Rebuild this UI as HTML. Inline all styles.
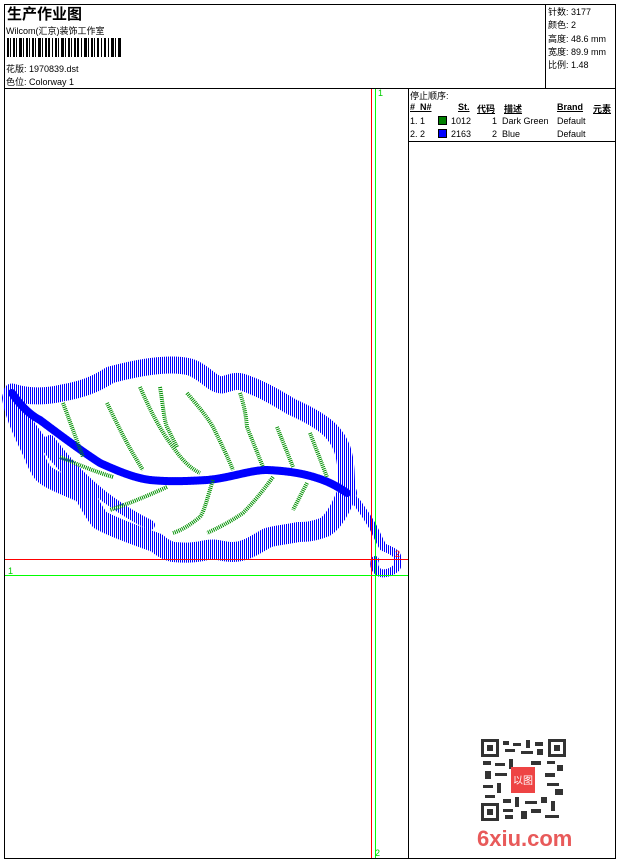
<!DOCTYPE html>
<html><head><meta charset="utf-8"><style>
body{margin:0;width:620px;height:860px;background:#fff;position:relative;font-family:"Liberation Sans","Noto Sans CJK SC",sans-serif;font-size:9px;color:#000;overflow:hidden}
.a{position:absolute;white-space:nowrap}
.ln{position:absolute;background:#000}
</style></head><body>
<div class="ln" style="left:4px;top:4px;width:612px;height:1px"></div>
<div class="ln" style="left:4px;top:858px;width:612px;height:1px"></div>
<div class="ln" style="left:4px;top:4px;width:1px;height:855px"></div>
<div class="ln" style="left:615px;top:4px;width:1px;height:855px"></div>
<div class="ln" style="left:4px;top:88px;width:612px;height:1px"></div>
<div class="ln" style="left:545px;top:4px;width:1px;height:84px"></div>
<div class="ln" style="left:408px;top:88px;width:1px;height:770px"></div>
<div class="ln" style="left:408px;top:141px;width:208px;height:1px"></div>
<div class="a" style="left:7px;top:3px;font-size:15px;font-weight:bold">生产作业图</div>
<div class="a" style="left:6px;top:24px">Wilcom(汇京)装饰工作室</div>
<svg class="a" style="left:7px;top:38px" width="115" height="19">
<g fill="#000">
<rect x="0" y="0" width="2" height="19"/><rect x="3" y="0" width="1" height="19"/><rect x="6" y="0" width="2" height="19"/><rect x="9" y="0" width="1" height="19"/><rect x="12" y="0" width="3" height="19"/><rect x="16" y="0" width="1" height="19"/><rect x="19" y="0" width="2" height="19"/><rect x="22" y="0" width="1" height="19"/><rect x="25" y="0" width="2" height="19"/><rect x="28" y="0" width="1" height="19"/><rect x="31" y="0" width="3" height="19"/><rect x="35" y="0" width="1" height="19"/><rect x="38" y="0" width="2" height="19"/><rect x="41" y="0" width="2" height="19"/><rect x="45" y="0" width="1" height="19"/><rect x="48" y="0" width="2" height="19"/><rect x="51" y="0" width="1" height="19"/><rect x="54" y="0" width="3" height="19"/><rect x="58" y="0" width="1" height="19"/><rect x="61" y="0" width="2" height="19"/><rect x="64" y="0" width="1" height="19"/><rect x="67" y="0" width="2" height="19"/><rect x="70" y="0" width="2" height="19"/><rect x="74" y="0" width="1" height="19"/><rect x="77" y="0" width="3" height="19"/><rect x="81" y="0" width="1" height="19"/><rect x="84" y="0" width="2" height="19"/><rect x="87" y="0" width="1" height="19"/><rect x="90" y="0" width="2" height="19"/><rect x="94" y="0" width="1" height="19"/><rect x="97" y="0" width="2" height="19"/><rect x="101" y="0" width="1" height="19"/><rect x="104" y="0" width="3" height="19"/><rect x="108" y="0" width="1" height="19"/><rect x="111" y="0" width="3" height="19"/>
</g></svg>
<div class="a" style="left:6px;top:62px">花版: 1970839.dst</div>
<div class="a" style="left:6px;top:75px">色位: Colorway 1</div>
<div class="a" style="left:548px;top:6px;line-height:13.3px">针数: 3177<br>颜色: 2<br>高度: 48.6 mm<br>宽度: 89.9 mm<br>比例: 1.48</div>
<div class="a" style="left:410px;top:89px">停止顺序:</div>
<div class="a" style="left:410px;top:102px;font-weight:bold;text-decoration:underline">#&nbsp; N#</div>
<div class="a" style="left:458px;top:102px;font-weight:bold;text-decoration:underline">St.</div>
<div class="a" style="left:477px;top:102px;font-weight:bold;text-decoration:underline">代码</div>
<div class="a" style="left:504px;top:102px;font-weight:bold;text-decoration:underline">描述</div>
<div class="a" style="left:557px;top:102px;font-weight:bold;text-decoration:underline">Brand</div>
<div class="a" style="left:593px;top:102px;font-weight:bold;text-decoration:underline">元素</div>
<div class="a" style="left:410px;top:116px">1. 1</div>
<div class="a" style="left:438px;top:116px;width:9px;height:9px;background:#008000;border:1px solid #000;box-sizing:border-box"></div>
<div class="a" style="left:451px;top:116px">1012</div>
<div class="a" style="left:492px;top:116px">1&nbsp; Dark Green</div>
<div class="a" style="left:557px;top:116px">Default</div>
<div class="a" style="left:410px;top:129px">2. 2</div>
<div class="a" style="left:438px;top:129px;width:9px;height:9px;background:#0000ff;border:1px solid #000;box-sizing:border-box"></div>
<div class="a" style="left:451px;top:129px">2163</div>
<div class="a" style="left:492px;top:129px">2&nbsp; Blue</div>
<div class="a" style="left:557px;top:129px">Default</div>
<svg class="a" style="left:0;top:0" width="620" height="860">
<defs>
<pattern id="h" width="2" height="4" patternUnits="userSpaceOnUse"><rect width="1" height="4" fill="#0000ff"/></pattern>
</defs>
<g fill="none" stroke-linejoin="round" stroke-linecap="round">
<path d="M12,392 C30,398 50,396 62,393 C80,390 95,385 110,375 C140,367 170,362 190,367 C205,372 212,385 222,385 C230,383 235,380 242,382 C265,390 280,400 292,407 C310,415 322,422 330,430 C342,442 345,455 346,470 L347,493" stroke="url(#h)" stroke-width="17"/>
<path d="M347,493 C340,510 333,522 325,527 C312,532 305,532 298,532 C285,535 275,535 267,538 C255,545 245,552 233,552 C222,552 215,548 207,550 C195,553 185,553 173,552 C165,550 160,546 157,543 C135,535 115,528 100,520 C92,510 88,500 83,493 C65,485 50,480 43,473 C37,465 35,458 33,453 C22,430 15,415 12,398" stroke="url(#h)" stroke-width="20"/>
<path d="M20,410 C40,440 60,470 95,495 M50,440 C80,480 110,505 150,525" stroke="url(#h)" stroke-width="10"/>
<path d="M12,393 C20,405 30,415 40,420 C60,435 80,450 100,463 C120,472 135,478 150,480 C170,482 190,481 207,480 C230,478 250,470 267,470 C290,471 305,474 317,478 C330,482 340,488 347,493" stroke="#0000ff" stroke-width="8" stroke-dasharray="1 0.6"/>
<path d="M347,493 C355,500 358,503 360,507 C366,515 370,522 373,527 C377,535 380,542 383,547 C390,550 395,552 397,556 C399,562 398,567 395,569 C390,573 385,574 380,573 C375,570 373,565 375,560" stroke="url(#h)" stroke-width="8"/>
</g>
<g fill="none" stroke="#009000" stroke-width="4" stroke-dasharray="1 1">
<path d="M63,403 L83,457 M107,403 C120,430 130,450 143,470 M140,387 C150,410 160,430 173,447 C182,460 190,468 200,473 M160,387 C163,405 164,420 167,427 L177,447 M187,393 C197,405 206,415 213,427 C222,445 228,458 233,470 M240,393 C244,405 246,415 247,427 L263,467 M277,427 L293,467 M310,433 L327,477"/>
<path d="M213,480 C208,495 205,510 200,517 C190,525 182,530 173,533 M273,477 C262,492 253,503 243,513 C230,522 218,528 207,533 M307,483 L293,510 M167,487 C145,497 125,505 110,510 M113,477 C90,470 75,463 60,457"/>
</g>
<text x="395" y="557" font-size="9" fill="#f00" font-family="Liberation Sans">2</text>
</svg>
<div class="ln" style="left:371px;top:89px;width:1px;height:769px;background:#f00"></div>
<div class="ln" style="left:375px;top:89px;width:1px;height:769px;background:#0f0"></div>
<div class="ln" style="left:5px;top:559px;width:403px;height:1px;background:#f00"></div>
<div class="ln" style="left:5px;top:575px;width:403px;height:1px;background:#0f0"></div>
<div class="a" style="left:378px;top:88px;color:#0c0">1</div>
<div class="a" style="left:8px;top:566px;color:#0c0">1</div>
<div class="a" style="left:375px;top:848px;color:#0c0">2</div>
<svg class="a" style="left:481px;top:739px" width="85" height="82">
<rect width="85" height="82" fill="#fff"/>
<g fill="#333">
<rect x="0" y="0" width="18" height="18"/><rect x="67" y="0" width="18" height="18"/><rect x="0" y="64" width="18" height="18"/>
</g>
<g fill="#fff"><rect x="3" y="3" width="12" height="12"/><rect x="70" y="3" width="12" height="12"/><rect x="3" y="67" width="12" height="12"/></g>
<g fill="#333"><rect x="6" y="6" width="6" height="6"/><rect x="73" y="6" width="6" height="6"/><rect x="6" y="70" width="6" height="6"/>
<rect x="22" y="2" width="6" height="4"/><rect x="32" y="4" width="8" height="3"/><rect x="45" y="1" width="4" height="8"/><rect x="54" y="3" width="8" height="4"/><rect x="24" y="10" width="10" height="3"/><rect x="40" y="12" width="12" height="3"/><rect x="56" y="10" width="6" height="6"/>
<rect x="2" y="22" width="8" height="4"/><rect x="14" y="24" width="10" height="3"/><rect x="28" y="20" width="4" height="10"/><rect x="50" y="22" width="10" height="4"/><rect x="66" y="22" width="8" height="3"/><rect x="76" y="26" width="6" height="6"/>
<rect x="4" y="32" width="6" height="8"/><rect x="14" y="34" width="12" height="3"/><rect x="64" y="34" width="10" height="4"/><rect x="2" y="46" width="10" height="3"/><rect x="16" y="44" width="4" height="10"/><rect x="66" y="44" width="12" height="3"/><rect x="74" y="50" width="8" height="6"/>
<rect x="4" y="56" width="10" height="3"/><rect x="22" y="60" width="8" height="4"/><rect x="34" y="58" width="4" height="10"/><rect x="44" y="62" width="12" height="3"/><rect x="60" y="58" width="6" height="6"/><rect x="70" y="62" width="4" height="10"/>
<rect x="22" y="70" width="10" height="3"/><rect x="40" y="72" width="6" height="8"/><rect x="50" y="70" width="10" height="4"/><rect x="64" y="76" width="14" height="3"/><rect x="24" y="76" width="8" height="4"/>
</g>
<rect x="30" y="28" width="24" height="26" fill="#e44"/>
<text x="42" y="45" font-size="10" fill="#fff" text-anchor="middle" font-family="Noto Sans CJK SC,sans-serif">以图</text>
</svg>
<div class="a" style="left:477px;top:826px;font-size:22px;font-weight:bold;color:#e85a5a">6xiu.com</div>
</body></html>
